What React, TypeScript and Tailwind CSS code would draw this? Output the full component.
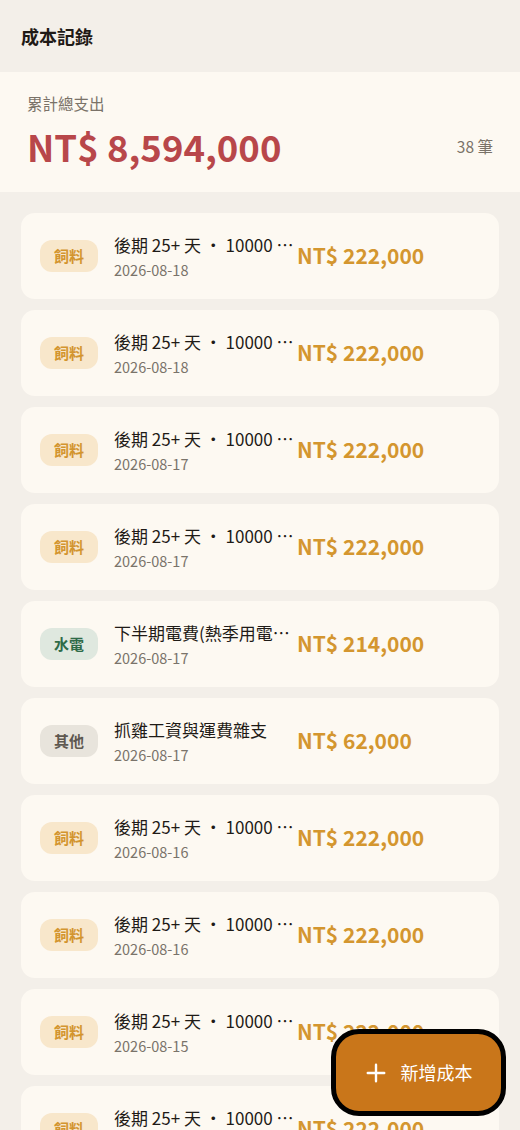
import React from 'react';

type Category = '飼料' | '水電' | '其他';

interface CostItem {
  category: Category;
  title: string;
  date: string;
  amount: number;
}

const feed = '後期 25+ 天 ・ 10000 隻飼料採購';

const items: CostItem[] = [
  { category: '飼料', title: feed, date: '2026-08-18', amount: 222000 },
  { category: '飼料', title: feed, date: '2026-08-18', amount: 222000 },
  { category: '飼料', title: feed, date: '2026-08-17', amount: 222000 },
  { category: '飼料', title: feed, date: '2026-08-17', amount: 222000 },
  { category: '水電', title: '下半期電費(熱季用電高峰)', date: '2026-08-17', amount: 214000 },
  { category: '其他', title: '抓雞工資與運費雜支', date: '2026-08-17', amount: 62000 },
  { category: '飼料', title: feed, date: '2026-08-16', amount: 222000 },
  { category: '飼料', title: feed, date: '2026-08-16', amount: 222000 },
  { category: '飼料', title: feed, date: '2026-08-15', amount: 222000 },
  { category: '飼料', title: feed, date: '2026-08-15', amount: 222000 },
];

const badgeStyles: Record<Category, string> = {
  飼料: 'bg-[#f8e7cb] text-[#d3952f]',
  水電: 'bg-[#dfe8df] text-[#2f6b48]',
  其他: 'bg-[#e8e4dc] text-[#5e5850]',
};

const money = (n: number) => `NT$ ${n.toLocaleString('en-US')}`;

const CostRow = ({ item }: { item: CostItem }) => (
  <div className="flex h-[86px] items-center rounded-[14px] bg-[#fdf9f2] pl-[19px]">
    <span
      className={`flex h-[32px] w-[58px] shrink-0 items-center justify-center rounded-[12px] text-[15px] font-bold ${badgeStyles[item.category]}`}
    >
      {item.category}
    </span>
    <div className="ml-[16px] flex w-[183px] shrink-0 flex-col">
      <span className="truncate text-[17px] leading-[23px] text-[#1f1b17]">{item.title}</span>
      <span className="mt-[5px] text-[14.5px] leading-[18px] text-[#7a736a]">{item.date}</span>
    </div>
    <span className="text-[21px] font-bold text-[#d4962f]">{money(item.amount)}</span>
  </div>
);

export default function App() {
  const total = 8594000;

  return (
    <div
      className="min-h-screen bg-[#f3efe9]"
      style={{ fontFamily: '"Noto Sans CJK TC", "Noto Sans", sans-serif' }}
    >
      {/* Header */}
      <header className="flex h-[72px] items-center px-[21px]">
        <h1 className="text-[18px] font-bold text-[#1f1a16]">成本記錄</h1>
      </header>

      {/* Summary */}
      <section className="flex h-[120px] flex-col justify-center bg-[#fdf9f2] px-[27px]">
        <p className="text-[15.5px] leading-[20px] text-[#7a7268]">累計總支出</p>
        <div className="mt-[10px] flex items-center justify-between">
          <span className="text-[36.5px] font-bold leading-[48px] text-[#b8474a]">{money(total)}</span>
          <span className="text-[15.5px] text-[#7a7268]">38 筆</span>
        </div>
      </section>

      {/* List */}
      <div className="flex flex-col gap-[11px] pb-[120px] pl-[21px] pr-[21px] pt-[21px]">
        {items.map((item, i) => (
          <CostRow key={i} item={item} />
        ))}
      </div>

      {/* Floating add button */}
      <button className="fixed bottom-[14px] right-[14px] flex h-[87px] w-[175px] items-center justify-center gap-[14px] rounded-[28px] border-[5px] border-black bg-[#c9761a] text-white">
        <svg width="22" height="22" viewBox="0 0 24 24" fill="none" stroke="currentColor" strokeWidth="2.6" strokeLinecap="round">
          <path d="M12 3v18M3 12h18" />
        </svg>
        <span className="text-[18px]">新增成本</span>
      </button>
    </div>
  );
}
